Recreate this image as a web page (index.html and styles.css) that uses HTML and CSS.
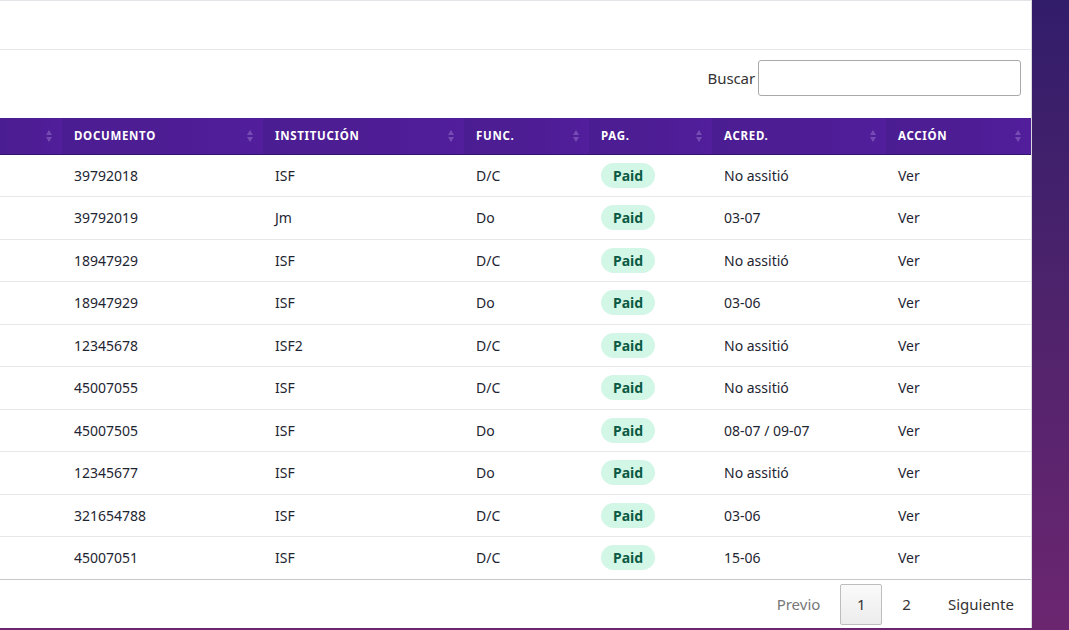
FILE: index.html
```html
<!DOCTYPE html>
<html lang="es">
<head>
<meta charset="utf-8">
<title>Tabla</title>
<link rel="stylesheet" href="styles.css">
</head>
<body>
<div class="page">
  <div class="card">
    <div class="card-head"></div>
    <div class="search-row">
      <label class="search-label">Buscar <input class="search-input" type="text"></label>
    </div>
    <table class="grid">
      <colgroup>
        <col class="c0"><col class="c1"><col class="c2"><col class="c3"><col class="c4"><col class="c5"><col class="c6">
      </colgroup>
      <thead>
        <tr>
          <th><div class="th-in"><span></span><span class="sort"><i class="up"></i><i class="down"></i></span></div></th>
          <th><div class="th-in"><span>Documento</span><span class="sort"><i class="up"></i><i class="down"></i></span></div></th>
          <th><div class="th-in"><span>Institución</span><span class="sort"><i class="up"></i><i class="down"></i></span></div></th>
          <th><div class="th-in"><span>Func.</span><span class="sort"><i class="up"></i><i class="down"></i></span></div></th>
          <th><div class="th-in"><span>Pag.</span><span class="sort"><i class="up"></i><i class="down"></i></span></div></th>
          <th><div class="th-in"><span>Acred.</span><span class="sort"><i class="up"></i><i class="down"></i></span></div></th>
          <th><div class="th-in"><span>Acción</span><span class="sort"><i class="up"></i><i class="down"></i></span></div></th>
        </tr>
      </thead>
      <tbody>
        <tr><td></td><td>39792018</td><td>ISF</td><td>D/C</td><td><span class="badge">Paid</span></td><td>No assitió</td><td>Ver</td></tr>
        <tr><td></td><td>39792019</td><td>Jm</td><td>Do</td><td><span class="badge">Paid</span></td><td>03-07</td><td>Ver</td></tr>
        <tr><td></td><td>18947929</td><td>ISF</td><td>D/C</td><td><span class="badge">Paid</span></td><td>No assitió</td><td>Ver</td></tr>
        <tr><td></td><td>18947929</td><td>ISF</td><td>Do</td><td><span class="badge">Paid</span></td><td>03-06</td><td>Ver</td></tr>
        <tr><td></td><td>12345678</td><td>ISF2</td><td>D/C</td><td><span class="badge">Paid</span></td><td>No assitió</td><td>Ver</td></tr>
        <tr><td></td><td>45007055</td><td>ISF</td><td>D/C</td><td><span class="badge">Paid</span></td><td>No assitió</td><td>Ver</td></tr>
        <tr><td></td><td>45007505</td><td>ISF</td><td>Do</td><td><span class="badge">Paid</span></td><td>08-07 / 09-07</td><td>Ver</td></tr>
        <tr><td></td><td>12345677</td><td>ISF</td><td>Do</td><td><span class="badge">Paid</span></td><td>No assitió</td><td>Ver</td></tr>
        <tr><td></td><td>321654788</td><td>ISF</td><td>D/C</td><td><span class="badge">Paid</span></td><td>03-06</td><td>Ver</td></tr>
        <tr><td></td><td>45007051</td><td>ISF</td><td>D/C</td><td><span class="badge">Paid</span></td><td>15-06</td><td>Ver</td></tr>
      </tbody>
    </table>
    <div class="pager">
      <span class="pbtn disabled">Previo</span>
      <span class="pbtn current">1</span>
      <span class="pbtn">2</span>
      <span class="pbtn">Siguiente</span>
    </div>
  </div>
</div>
</body>
</html>
```
FILE: styles.css
```css
html, body {
  margin: 0;
  padding: 0;
}
body {
  width: 1069px;
  height: 630px;
  overflow: hidden;
  background: linear-gradient(180deg, #321d6b 0%, #4f236c 50%, #6c2670 100%);
  font-family: "Noto Sans", "Open Sans", sans-serif;
  color: #1f2533;
}
.page {
  display: flex;
}
.card {
  width: 1032px;
  height: 628px;
  background: #fff;
  border-top: 1px solid #e3e3e8;
  border-right: 1px solid #d9d9de;
  box-sizing: border-box;
  display: flex;
  flex-direction: column;
}
.card-head {
  height: 48px;
  border-bottom: 1px solid #e6e6ea;
  flex: none;
}
.search-row {
  display: flex;
  justify-content: flex-end;
  padding: 10px 10px 0 0;
  height: 68px;
  box-sizing: border-box;
  flex: none;
}
.search-label {
  font-size: 15px;
  color: #333;
  display: flex;
  align-items: center;
  gap: 3px;
  height: 36px;
  letter-spacing: -0.1px;
}
.search-input {
  width: 263px;
  height: 36px;
  box-sizing: border-box;
  border: 1px solid #a9a9a9;
  border-radius: 3px;
  margin: 0;
  padding: 2px 6px;
  font: inherit;
}
.grid {
  width: 1031px;
  table-layout: fixed;
  border-collapse: collapse;
  font-size: 14px;
  flex: none;
}
.c0 { width: 62px; }
.c1 { width: 201px; }
.c2 { width: 201px; }
.c3 { width: 125px; }
.c4 { width: 123px; }
.c5 { width: 174px; }
.c6 { width: 145px; }
.grid thead th {
  background: linear-gradient(90deg, #4b1d92 0%, #4e1d95 60%, #521e9c 100%);
  color: #fff;
  height: 36px;
  box-sizing: border-box;
  padding: 0 0 0 12px;
  text-align: left;
  font-size: 11.5px;
  font-weight: 700;
  text-transform: uppercase;
  letter-spacing: 0.7px;
  border-bottom: 1px solid #351470;
}
.th-in {
  display: flex;
  justify-content: space-between;
  align-items: center;
  padding-right: 10px;
}
.sort {
  display: flex;
  flex-direction: column;
  gap: 2px;
  opacity: 0.3;
}
.sort i {
  display: block;
  width: 0;
  height: 0;
  border-left: 3.5px solid transparent;
  border-right: 3.5px solid transparent;
}
.sort .up { border-bottom: 5px solid #c9b8f0; }
.sort .down { border-top: 5px solid #c9b8f0; }
.grid tbody td {
  height: 42.5px;
  box-sizing: border-box;
  padding: 0 0 0 12px;
  border-bottom: 1px solid #e8e8ea;
  white-space: nowrap;
  vertical-align: middle;
  color: #1e2532;
}
.grid tbody tr:last-child td {
  border-bottom: 1.5px solid #c8c8cc;
}
.badge {
  display: inline-block;
  background: #d3f7e6;
  color: #0b5a43;
  font-weight: 700;
  font-size: 14px;
  line-height: 25px;
  height: 25px;
  padding: 0 12px;
  border-radius: 13px;
}
.pager {
  display: flex;
  justify-content: flex-end;
  align-items: center;
  gap: 3px;
  padding: 4px 0 0 0;
  font-size: 15px;
}
.pbtn {
  display: inline-flex;
  align-items: center;
  justify-content: center;
  height: 41px;
  box-sizing: border-box;
  padding: 0 16px;
  border: 1px solid transparent;
  border-radius: 2px;
  color: #333;
}
.pbtn.disabled {
  color: #777;
}
.pbtn.current {
  background: linear-gradient(180deg, #fafafa 0%, #ececec 100%);
  border-color: #bdbdbd;
  width: 42px;
  padding: 0;
}
```
